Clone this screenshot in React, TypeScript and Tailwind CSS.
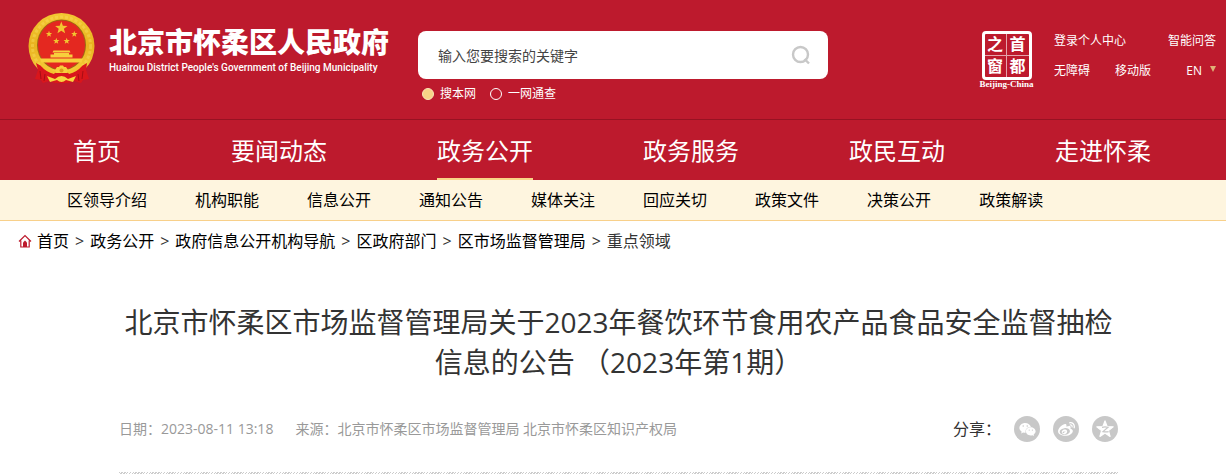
import { FaWeibo, FaWeixin } from "react-icons/fa";

const NAV = ["首页", "要闻动态", "政务公开", "政务服务", "政民互动", "走进怀柔"];
const ACTIVE = "政务公开";

const SUB_NAV = [
  "区领导介绍",
  "机构职能",
  "信息公开",
  "通知公告",
  "媒体关注",
  "回应关切",
  "政策文件",
  "决策公开",
  "政策解读",
];

const CRUMBS = [
  "首页",
  "政务公开",
  "政府信息公开机构导航",
  "区政府部门",
  "区市场监督管理局",
];

interface IStar {
  cx: number;
  cy: number;
  r: number;
}
const Star = ({ cx, cy, r }: IStar) => {
  const points = Array.from({ length: 10 }, (_, i) => {
    const a = (Math.PI / 5) * i - Math.PI / 2;
    const d = i % 2 === 0 ? r : r * 0.42;
    return `${cx + d * Math.cos(a)},${cy + d * Math.sin(a)}`;
  });
  return <polygon points={points.join(" ")} />;
};

const Emblem = () => (
  <svg viewBox="0 0 68 71" className="w-[68px] h-[71px] shrink-0">
    <defs>
      <linearGradient id="gold" x1="0" y1="0" x2="0" y2="1">
        <stop offset="0" stopColor="#f3c832" />
        <stop offset="0.5" stopColor="#e9b21f" />
        <stop offset="1" stopColor="#f9d443" />
      </linearGradient>
    </defs>
    <circle cx="33.5" cy="33" r="33" fill="url(#gold)" />
    <circle
      cx="33.5"
      cy="33"
      r="29"
      fill="none"
      stroke="#f9de62"
      strokeWidth="3"
      strokeDasharray="3 2"
      opacity="0.4"
    />
    <ellipse cx="33.5" cy="32" rx="24.5" ry="25.5" fill="#9d6a12" />
    <ellipse cx="33.5" cy="32" rx="23.5" ry="24.5" fill="#e42820" />
    <g fill="#f2c531">
      <Star cx={33.3} cy={15} r={6.5} />
      <Star cx={21} cy={21} r={3.3} />
      <Star cx={46.3} cy={21} r={3.3} />
      <Star cx={28.3} cy={28} r={3.3} />
      <Star cx={38.7} cy={28} r={3.3} />
    </g>
    <g fill="#f7cf3c">
      <path d="M25.5 37.5 H41.5 L42.5 39.5 H24.5 Z" />
      <path d="M26 40 H41 V41.5 H44.5 V44.5 H22.5 V41.5 H26 Z" />
      <path d="M12 45.5 H55 L53.5 49.5 H13.5 Z" />
    </g>
    <path
      d="M8 50 L20 57 L28 60 L39 60 L47 57 L59 50 L58 57 L61 66 L55 67 L53 70 L46 68 L40 70 H27 L21 68 L15 70 L13 67 L7 66 L10 57 Z"
      fill="#d9161c"
    />
    <path
      d="M12 58 l1 8 M17 61 l-1 7 M55 58 l-1 8 M50 61 l1 7"
      stroke="#a80d14"
      fill="none"
    />
    <path
      d="M14 51 Q22 58 28 58.5 L26 61 Q18 59 13 53 Z M53 51 Q45 58 39 58.5 L41 61 Q49 59 54 53 Z"
      fill="#f3c62f"
    />
    <path
      d="M27 57 L29 54 H31 L32 52.5 H35 L36 54 H38 L40 57 L38 60 H29 Z"
      fill="#f7cf3c"
    />
    <circle cx="33.5" cy="57.5" r="2" fill="#e09a1a" />
    <path
      d="M19 63 L27 66 Q33.5 60 40 66 L48 63 L45 69 L38 67 Q33.5 71 29 67 L22 69 Z"
      fill="#f7d63f"
    />
  </svg>
);

const Stamp = () => (
  <a href="#" className="flex flex-col items-center shrink-0 w-[55px]">
    <span className="grid grid-cols-2 w-[50px] h-[49px] border-3 border-white rounded-sm text-center text-base leading-5 font-bold">
      <span className="border-r border-b border-white/60">之</span>
      <span className="border-b border-white/60">首</span>
      <span className="border-r border-white/60">窗</span>
      <span>都</span>
    </span>
    <span className="font-['Liberation_Serif',serif] font-bold text-[9px] leading-[9px] whitespace-nowrap">
      Beijing-China
    </span>
  </a>
);

const SearchIcon = () => (
  <svg
    viewBox="0 0 20 20"
    className="w-5 h-5"
    fill="none"
    stroke="#c8c8c8"
    strokeWidth="2.4"
  >
    <circle cx="9.5" cy="9.5" r="7.5" />
    <path d="M13.5 14 L18 18.5" />
  </svg>
);

const HomeIcon = () => (
  <svg viewBox="0 0 14 14" className="w-[14px] h-[14px]" fill="none">
    <path
      d="M1 7.5 L7 1.5 L13 7.5 M2.8 6.5 V13 H11.2 V6.5"
      stroke="#bd1a2d"
      strokeWidth="1.2"
    />
    <path d="M5 13 V8.5 L7 6.5 L9 8.5 V13 Z" fill="#bd1a2d" />
  </svg>
);

const QzoneIcon = () => (
  <svg viewBox="0 0 20 20" className="w-5 h-5">
    <g fill="#fff" stroke="#fff" strokeWidth="1.2" strokeLinejoin="round">
      <Star cx={10} cy={10.5} r={8.6} />
    </g>
    <path
      d="M7 8.3 Q10 7.6 13 8.3 L8 12.6 Q11 13.3 13.6 12.6"
      fill="none"
      stroke="#c8c8c8"
      strokeWidth="1.2"
    />
  </svg>
);

const radio =
  "appearance-none w-3 h-3 rounded-full border border-white checked:bg-[#f8d487] checked:border-[#fbe6b8]";
const share =
  "w-[26px] h-[26px] rounded-full bg-[#c8c8c8] text-white flex items-center justify-center";

export default function App() {
  return (
    <div className="min-h-screen bg-white font-['Open_Sans','Noto_Sans_CJK_SC',sans-serif] text-[#333]">
      <header className="bg-[#bd1a2d] text-white">
        <div className="flex items-start pl-7 pr-[10px] pt-[13px] pb-4 border-b border-[#971222]">
          <a href="#" className="flex shrink-0">
            <Emblem />
            <span className="pl-[13px] pt-[13px]">
              <span className="block text-[28px] leading-8 font-black whitespace-nowrap">
                北京市怀柔区人民政府
              </span>
              <span className="block pt-1 font-[Roboto,sans-serif] text-[10px] leading-3 font-medium whitespace-nowrap">
                Huairou District People's Government of Beijing Municipality
              </span>
            </span>
          </a>

          <form
            className="ml-[29px] pt-[18px] flex-1 max-w-[410px]"
            onSubmit={(e) => e.preventDefault()}
          >
            <div className="flex items-center h-12 bg-white rounded-lg pl-5 pr-[17px]">
              <input
                type="text"
                aria-label="搜索"
                placeholder="输入您要搜索的关键字"
                className="flex-1 min-w-0 pt-[2px] text-sm text-[#333] placeholder:text-[#444] outline-none"
              />
              <button type="submit" aria-label="搜索按钮">
                <SearchIcon />
              </button>
            </div>
            <div className="flex gap-[14px] pl-1 pt-[6px] text-xs leading-[18px]">
              <label className="flex items-center gap-[6px]">
                <input
                  type="radio"
                  name="scope"
                  defaultChecked
                  className={radio}
                />
                搜本网
              </label>
              <label className="flex items-center gap-[6px]">
                <input type="radio" name="scope" className={radio} />
                一网通查
              </label>
            </div>
          </form>

          <div className="flex ml-auto pt-[18px]">
            <Stamp />
            <div className="ml-5 w-[162px] pt-px text-xs leading-[18px] space-y-3">
              <div className="flex justify-between">
                <a href="#">登录个人中心</a>
                <a href="#">智能问答</a>
              </div>
              <div className="flex">
                <a href="#">无障碍</a>
                <a href="#" className="ml-[25px]">
                  移动版
                </a>
                <a href="#" className="ml-auto flex items-center gap-2">
                  EN
                  <svg viewBox="0 0 6 6" className="w-[6px] h-[6px] mb-1">
                    <path d="M0 0 H6 L3 6 Z" fill="#dfb277" />
                  </svg>
                </a>
              </div>
            </div>
          </div>
        </div>

        <nav className="flex gap-[110px] pl-[73px] text-2xl whitespace-nowrap">
          {NAV.map((v) => (
            <a
              href="#"
              key={v}
              className={`h-[60px] leading-[62px] border-b-2 ${
                v === ACTIVE ? "border-[#f8d487]" : "border-transparent"
              }`}
            >
              {v}
            </a>
          ))}
        </nav>
      </header>

      <nav className="flex gap-12 pl-[67px] bg-[#fef5df] border-b border-[#f8d08a] text-black leading-10 whitespace-nowrap">
        {SUB_NAV.map((v) => (
          <a href="#" key={v}>
            {v}
          </a>
        ))}
      </nav>

      <div className="flex items-center pl-[18px] leading-10 whitespace-nowrap">
        <HomeIcon />
        <div className="flex pl-[5px]">
          {CRUMBS.map((v) => (
            <span key={v}>
              <a href="#" className="text-black">
                {v}
              </a>
              <span className="px-[6px]">&gt;</span>
            </span>
          ))}
          <span>重点领域</span>
        </div>
      </div>

      <main className="pl-[119px] pr-[108px] pt-[41px]">
        <h1 className="text-[28px] leading-10 text-center">
          北京市怀柔区市场监督管理局关于2023年餐饮环节食用农产品食品安全监督抽检信息的公告
          （2023年第1期）
        </h1>
        <div className="flex items-center justify-between pt-[34px] pb-[30px]">
          <div className="flex gap-[22px] text-sm text-[#999]">
            <span>日期：2023-08-11 13:18</span>
            <span>来源：北京市怀柔区市场监督管理局 北京市怀柔区知识产权局</span>
          </div>
          <div className="flex items-center gap-[13px]">
            <span>分享：</span>
            <button aria-label="微信" className={share}>
              <FaWeixin size={17} />
            </button>
            <button aria-label="微博" className={share}>
              <FaWeibo size={17} />
            </button>
            <button aria-label="QQ空间" className={share}>
              <QzoneIcon />
            </button>
          </div>
        </div>
        <div className="h-[2px] bg-[repeating-linear-gradient(135deg,#ccc_0_1px,#fff_1px_2px)]" />
      </main>
    </div>
  );
}
